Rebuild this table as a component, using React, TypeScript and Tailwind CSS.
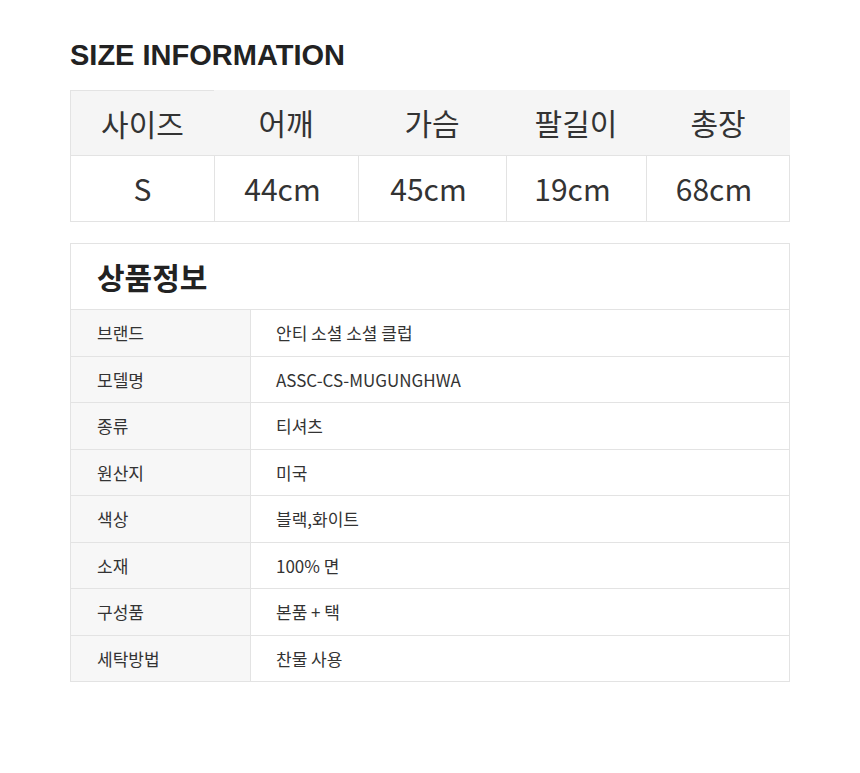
import React from "react";

const sizeHeaders = ["사이즈", "어깨", "가슴", "팔길이", "총장"];
const sizeValues = ["S", "44cm", "45cm", "19cm", "68cm"];
const info: [string, string][] = [
  ["브랜드", "안티 소셜 소셜 클럽"],
  ["모델명", "ASSC-CS-MUGUNGHWA"],
  ["종류", "티셔츠"],
  ["원산지", "미국"],
  ["색상", "블랙,화이트"],
  ["소재", "100% 면"],
  ["구성품", "본품 + 택"],
  ["세탁방법", "찬물 사용"],
];

export default function App() {
  return (
    <div
      className="w-[860px] h-[773px] bg-white text-[#333]"
      style={{ fontFamily: '"Noto Sans CJK KR", "Noto Sans", sans-serif' }}
    >
      <div className="px-[70px] pt-[36px]">
        <h2
          className="text-[29px] leading-[38px] font-bold text-[#222]"
          style={{ fontFamily: '"Liberation Sans", Arial, sans-serif' }}
        >
          SIZE INFORMATION
        </h2>
        <div className="mt-[16px] grid grid-cols-[144px_144px_148px_140px_144px]">
          {sizeHeaders.map((h, i) => (
            <div
              key={h}
              className={
                "h-[66px] bg-[#f5f5f5] flex items-center justify-center text-[30px] text-[#333] border-b border-[#e3e3e3] " +
                (i === 0 ? "border-l border-t" : "")
              }
            >
              {h}
            </div>
          ))}
          {sizeValues.map((v, i) => (
            <div
              key={v}
              className={
                "h-[66px] flex items-center justify-center text-[30px] text-[#333] border-l border-b border-[#e3e3e3] " +
                (i === 0 ? "" : "pr-[8px] ") +
                (i === 4 ? "border-r" : "")
              }
            >
              {v}
            </div>
          ))}
        </div>

        <div className="mt-[21px] border border-[#e3e3e3]">
          <div className="h-[65px] flex items-center px-[26px]">
            <span className="text-[30px] font-bold text-[#222]">상품정보</span>
          </div>
          {info.map(([k, v]) => (
            <div key={k} className="h-[46.5px] flex border-t border-[#e3e3e3] text-[17px] text-[#333]">
              <div className="w-[180px] bg-[#f7f7f7] border-r border-[#e3e3e3] flex items-center pl-[26px]">{k}</div>
              <div className="flex-1 flex items-center pl-[25px]">{v}</div>
            </div>
          ))}
        </div>
      </div>
    </div>
  );
}
